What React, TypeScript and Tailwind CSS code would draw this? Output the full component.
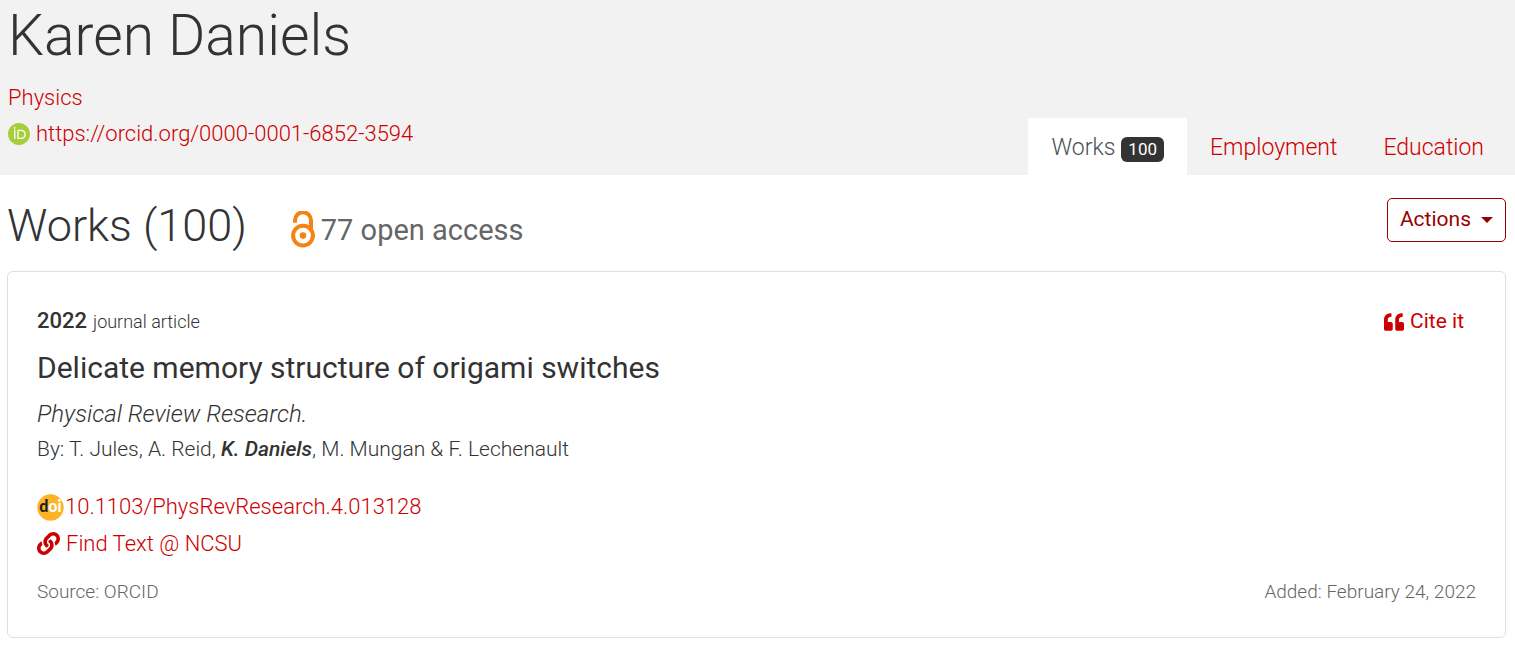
import React, { useState } from 'react';
import { FaQuoteLeft, FaLink } from 'react-icons/fa';
import { SiOrcid } from 'react-icons/si';

interface Work {
  id: number;
  year: number;
  type: string;
  title: string;
  journal: string;
  authors: { name: string; highlight?: boolean }[];
  doi: string;
  source: string;
  added: string;
}

const works: Work[] = [
  {
    id: 1,
    year: 2022,
    type: 'journal article',
    title: 'Delicate memory structure of origami switches',
    journal: 'Physical Review Research',
    authors: [
      { name: 'T. Jules' },
      { name: 'A. Reid' },
      { name: 'K. Daniels', highlight: true },
      { name: 'M. Mungan' },
      { name: 'F. Lechenault' },
    ],
    doi: '10.1103/PhysRevResearch.4.013128',
    source: 'ORCID',
    added: 'February 24, 2022',
  },
];

const tabs = [
  { id: 'works', label: 'Works', count: 100 },
  { id: 'employment', label: 'Employment' },
  { id: 'education', label: 'Education' },
];

const OpenAccessIcon: React.FC = () => (
  <svg className="w-6 h-[38px]" viewBox="0 0 24 38" fill="none" aria-hidden="true">
    <circle cx="12" cy="24.6" r="9.9" stroke="#f68212" strokeWidth="4" />
    <circle cx="12" cy="24.6" r="3.3" fill="#f68212" />
    <path d="M4 11.7V9.2a8 8 0 0 1 16 0v10" stroke="#f68212" strokeWidth="4" />
  </svg>
);

const DoiIcon: React.FC = () => (
  <svg className="w-[27px] h-[27px] mt-0.5" viewBox="0 0 27 27" aria-hidden="true">
    <circle cx="13.5" cy="13.5" r="13.2" fill="#fcb425" />
    <text x="13.5" y="18" textAnchor="middle" fontFamily="Lato, sans-serif" fontWeight="900" fontSize="16" fill="#fff">
      <tspan fill="#231f20">d</tspan>oi
    </text>
  </svg>
);

const WorkCard: React.FC<{ work: Work }> = ({ work }) => (
  <article className="border border-[#dfdfdf] rounded-md px-[29px] pt-7 pb-[31px]">
    <div className="flex items-center justify-between h-10">
      <div className="flex items-baseline gap-1.5">
        <span className="text-[22px] font-medium">{work.year}</span>
        <span className="text-lg">{work.type}</span>
      </div>
      <button className="flex items-center gap-1.5 mr-3 mt-1 text-[21px] font-normal text-[#cc0000]">
        <FaQuoteLeft className="w-5 h-5" />
        Cite it
      </button>
    </div>
    <h3 className="text-[30px] leading-[56px] font-normal">{work.title}</h3>
    <p className="text-2xl leading-9 italic">{work.journal}.</p>
    <p className="text-[21px] leading-[34px]">
      By:{' '}
      {work.authors.map((author, i) => (
        <React.Fragment key={author.name}>
          {i > 0 && (i === work.authors.length - 1 ? ' & ' : ', ')}
          {author.highlight ? <em className="font-medium">{author.name}</em> : author.name}
        </React.Fragment>
      ))}
    </p>
    <div className="mt-[22px] mb-4 flex flex-col items-start text-[22px] leading-[37px] text-[#cc0000]">
      <a href="#doi" className="flex items-center gap-px">
        <DoiIcon />
        {work.doi}
      </a>
      <a href="#fulltext" className="flex items-center gap-1.5">
        <FaLink className="w-[23px] h-[23px]" />
        Find Text @ NCSU
      </a>
    </div>
    <div className="flex justify-between text-[19px] leading-7 text-[#666]">
      <span>Source: {work.source}</span>
      <span>Added: {work.added}</span>
    </div>
  </article>
);

const App: React.FC = () => {
  const [activeTab, setActiveTab] = useState('works');

  return (
    <div className="min-h-screen bg-white text-[#333] font-light font-[Roboto,sans-serif]">
      <header className="flex items-end justify-between bg-[#f2f2f2] px-2">
        <div className="pb-[23px]">
          <h1 className="text-[57px] leading-[72px]">Karen Daniels</h1>
          <div className="mt-2 flex flex-col items-start text-[22px] leading-9 text-[#cc0000]">
            <a href="#physics">Physics</a>
            <a href="#orcid" className="flex items-center gap-1.5">
              <span className="rounded-full bg-white">
                <SiOrcid className="w-[22px] h-[22px] text-[#a6ce39]" />
              </span>
              https://orcid.org/0000-0001-6852-3594
            </a>
          </div>
        </div>
        <nav className="flex">
          {tabs.map((tab) => (
            <button
              key={tab.id}
              onClick={() => setActiveTab(tab.id)}
              className={`flex items-center gap-1.5 h-[57px] px-[23px] pt-[3px] text-[23px] ${
                activeTab === tab.id ? 'bg-white text-[#495057]' : 'text-[#cc0000]'
              }`}
            >
              {tab.label}
              {tab.count && (
                <span className="mt-0.5 px-[7px] rounded-md bg-[#333] text-white text-[17px] leading-[25px] font-normal">
                  {tab.count}
                </span>
              )}
            </button>
          ))}
        </nav>
      </header>

      <main className="pl-[7px] pr-[9px] pb-2">
        <div className="flex items-center justify-between h-24 pt-1.5">
          <div className="flex items-center">
            <h2 className="text-[45px] leading-[56px]">Works (100)</h2>
            <div className="flex items-center gap-1.5 ml-11 mt-2 text-[29px] leading-9 font-normal text-[#666]">
              <OpenAccessIcon />
              77 open access
            </div>
          </div>
          <button className="flex items-center gap-2.5 h-11 px-3 mb-3 border border-[#990000] rounded-[5px] text-[21px] font-normal text-[#990000]">
            Actions
            <svg className="w-3 h-1.5" viewBox="0 0 12 6" fill="currentColor" aria-hidden="true">
              <path d="M0 0h12L6 6z" />
            </svg>
          </button>
        </div>
        {works.map((work) => (
          <WorkCard key={work.id} work={work} />
        ))}
      </main>
    </div>
  );
};

export default App;
